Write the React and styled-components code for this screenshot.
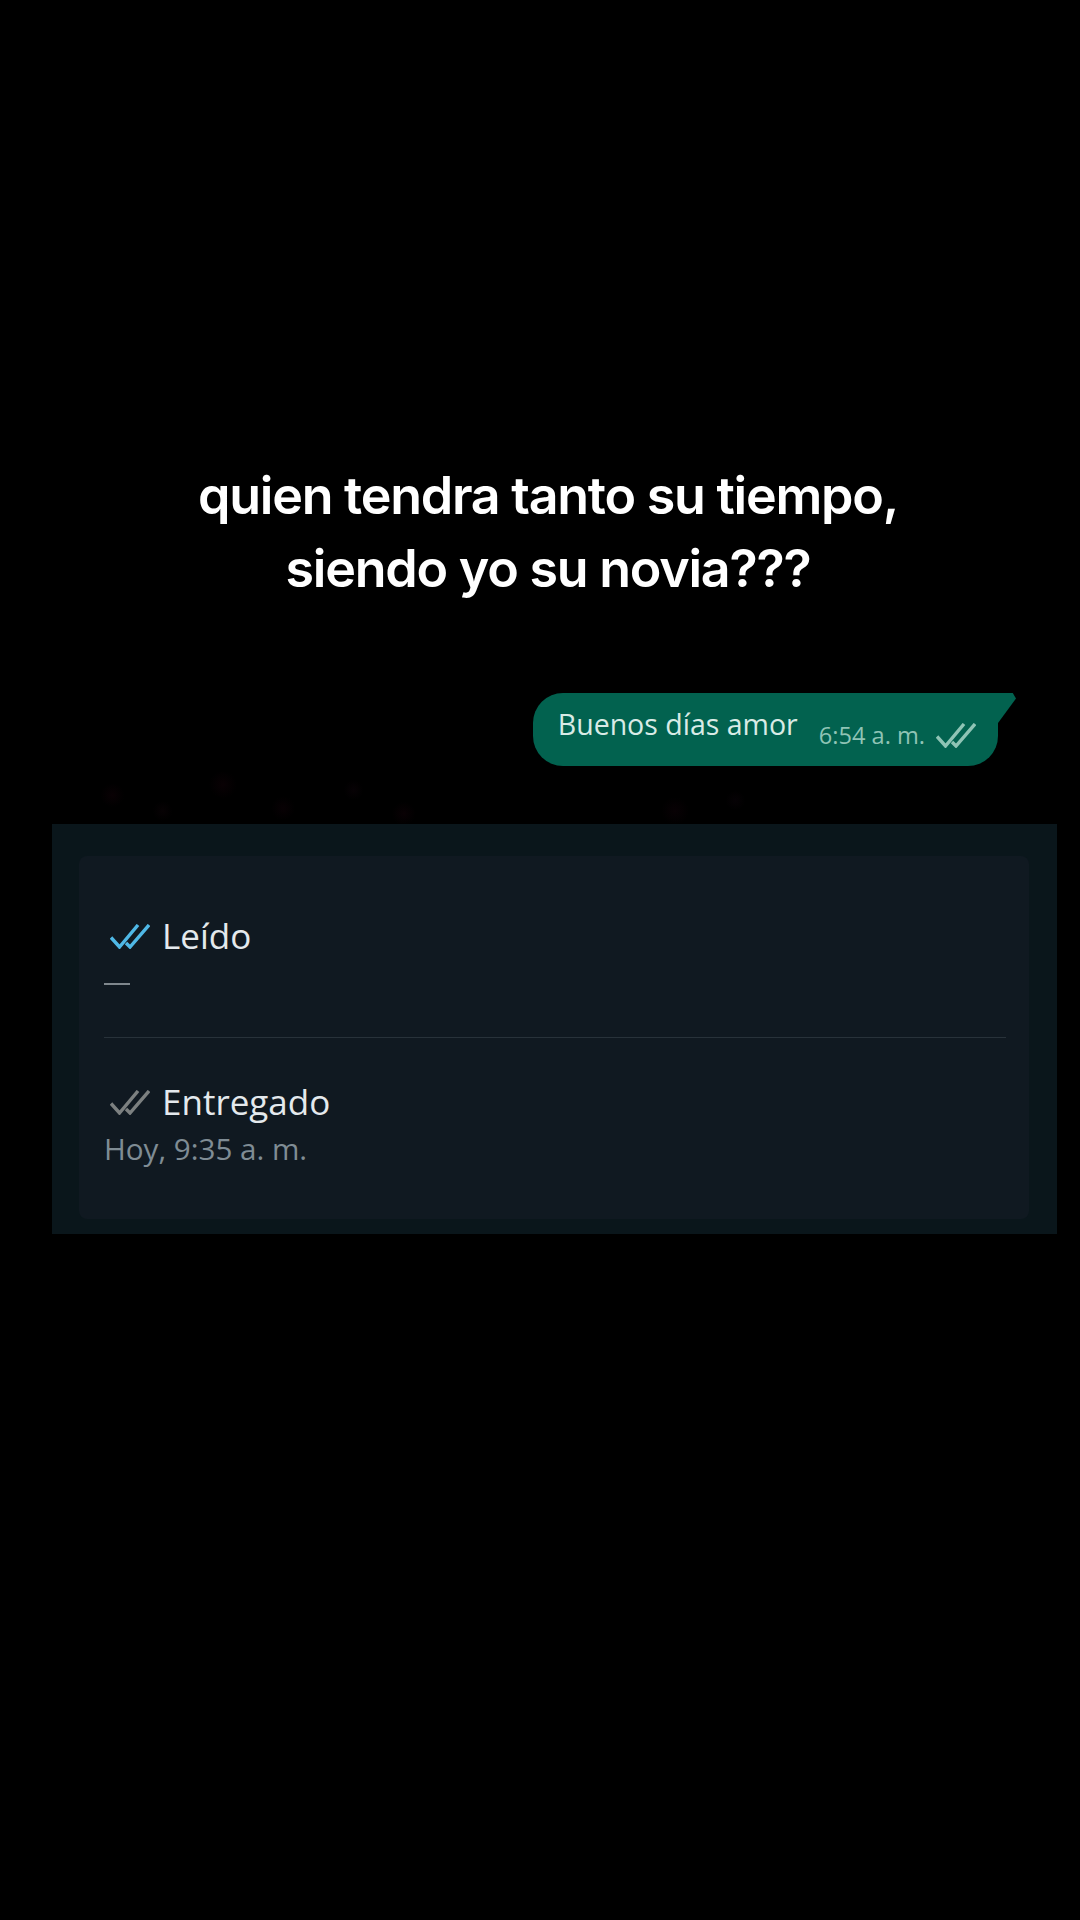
import styled, { createGlobalStyle } from "styled-components";

const GlobalStyle = createGlobalStyle`
  html, body {
    margin: 0;
    background: #000;
  }
`;

const Page = styled.div`
  width: 1080px;
  height: 1920px;
  overflow: hidden;
  background: #000;
  display: flex;
  flex-direction: column;
  font-family: "Open Sans", "Noto Sans", sans-serif;
`;

const Caption = styled.h1`
  margin: 459px 0 0;
  padding-left: 16px;
  color: #fff;
  font-family: Inter, "Liberation Sans", sans-serif;
  font-size: 52px;
  font-weight: 600;
  line-height: 73px;
  letter-spacing: -1.25px;
  text-align: center;
`;

const ChatArea = styled.div`
  margin: 88px 23px 0 52px;
  height: 131px;
  display: flex;
  justify-content: flex-end;
  align-items: flex-start;
  background:
    radial-gradient(circle at 6% 78%, #090104 0, transparent 12px),
    radial-gradient(circle at 11% 90%, #070204 0, transparent 10px),
    radial-gradient(circle at 17% 70%, #090104 0, transparent 14px),
    radial-gradient(circle at 23% 88%, #080104 0, transparent 12px),
    radial-gradient(circle at 30% 74%, #070205 0, transparent 10px),
    radial-gradient(circle at 35% 92%, #090104 0, transparent 12px),
    radial-gradient(circle at 62% 90%, #080104 0, transparent 14px),
    radial-gradient(circle at 68% 82%, #060205 0, transparent 10px);
`;

const Bubble = styled.div`
  position: relative;
  margin-right: 59px;
  height: 73px;
  padding: 0 22px 0 25px;
  display: flex;
  align-items: flex-start;
  gap: 21px;
  background: #02624f;
  border-radius: 30px 0 30px 30px;

  &::after {
    content: "";
    position: absolute;
    top: 0;
    left: 100%;
    width: 18px;
    height: 30px;
    background: #02624f;
    clip-path: polygon(0 0, 82% 0, 100% 18%, 0 100%);
  }
`;

const BubbleText = styled.span`
  margin-top: 11px;
  color: #d9ebe6;
  font-size: 28.5px;
  line-height: 40px;
  white-space: nowrap;
`;

const BubbleMeta = styled.span`
  margin-top: 25px;
  display: flex;
  align-items: center;
  gap: 11px;
  color: #8fc4b5;
  font-size: 23.6px;
  line-height: 34px;
  white-space: nowrap;
`;

const Panel = styled.section`
  margin-left: 52px;
  width: 1005px;
  height: 410px;
  box-sizing: border-box;
  padding: 32px 28px 15px 27px;
  background: #0a161b;
`;

const Card = styled.div`
  height: 100%;
  box-sizing: border-box;
  padding: 0 23px 0 25px;
  background: #101921;
  border-radius: 8px;
`;

const Receipt = styled.div`
  height: ${(props) => props.$height}px;
  box-sizing: border-box;
  padding-top: ${(props) => props.$top}px;
  & + & {
    border-top: 1px solid #28323a;
  }
`;

const ReceiptTitle = styled.div`
  display: flex;
  align-items: center;
  gap: 12px;
  padding-left: 6px;
  color: #e4e9ed;
  font-size: 35px;
  line-height: 48px;
`;

const ReceiptTime = styled.div`
  margin-top: 1px;
  color: #7f8c94;
  font-size: 29.6px;
  line-height: 44px;
`;

const Dash = styled.div`
  margin-top: 23px;
  width: 26px;
  height: 2px;
  background: #7f878d;
`;

const DoubleCheck = ({ color }) => (
  <svg width="40" height="25" viewBox="0 0 40 25" fill="none" stroke={color} strokeWidth="3.4">
    <path d="M1 13.5 L9.5 23 L28 1" />
    <path d="M16 19 L20 23 L39 1" />
  </svg>
);

const App = () => {
  return (
    <Page>
      <GlobalStyle />
      <Caption>
        quien tendra tanto su tiempo,
        <br />
        siendo yo su novia???
      </Caption>
      <ChatArea>
        <Bubble>
          <BubbleText>Buenos días amor</BubbleText>
          <BubbleMeta>
            6:54 a. m.
            <DoubleCheck color="#8fc4b5" />
          </BubbleMeta>
        </Bubble>
      </ChatArea>
      <Panel>
        <Card>
          <Receipt $height={181} $top={56}>
            <ReceiptTitle>
              <DoubleCheck color="#4fb8e6" />
              Leído
            </ReceiptTitle>
            <Dash />
          </Receipt>
          <Receipt $height={182} $top={40}>
            <ReceiptTitle>
              <DoubleCheck color="#7c8080" />
              Entregado
            </ReceiptTitle>
            <ReceiptTime>Hoy, 9:35 a. m.</ReceiptTime>
          </Receipt>
        </Card>
      </Panel>
    </Page>
  );
};

export default App;
